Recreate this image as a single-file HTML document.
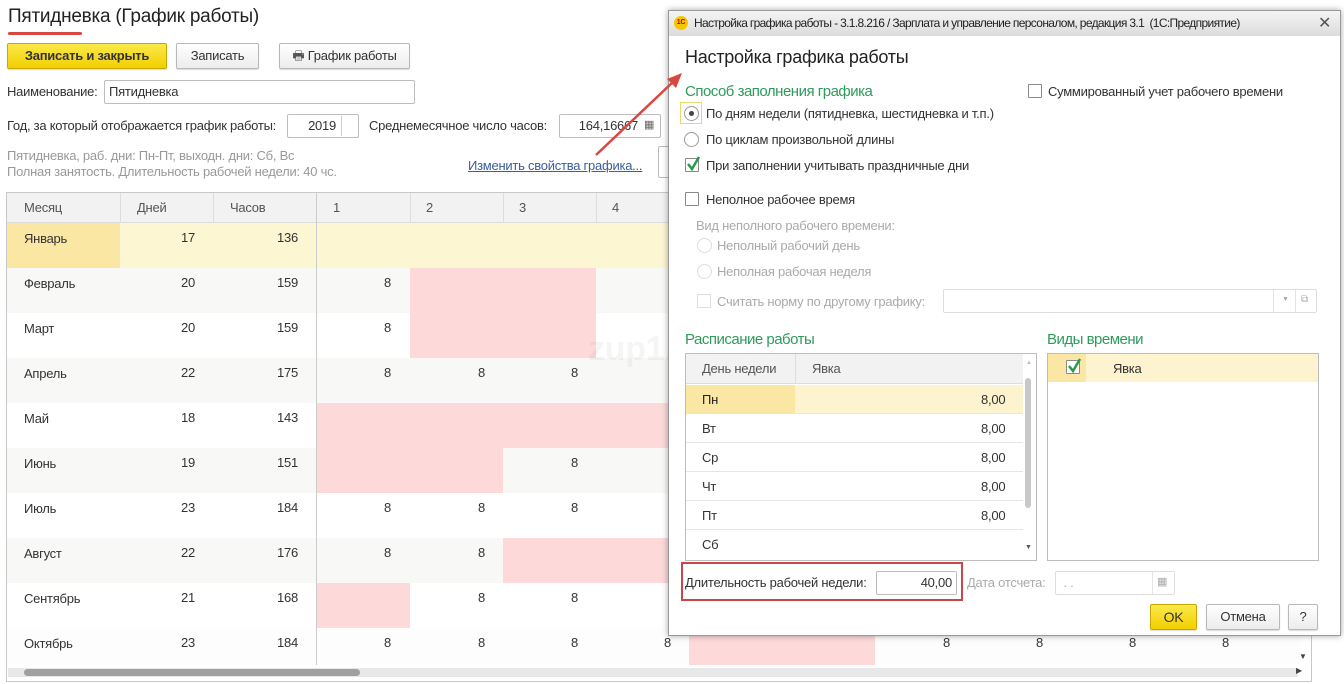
<!DOCTYPE html>
<html><head><meta charset="utf-8"><style>
*{margin:0;padding:0;box-sizing:border-box}
body{width:1344px;height:684px;overflow:hidden;background:#fff;font-family:"Liberation Sans",Arial,sans-serif;font-size:13px;color:#333;position:relative;letter-spacing:-0.25px}
.a{position:absolute;white-space:nowrap}
.btn{position:absolute;border:1px solid #b8b8b8;border-radius:2px;background:linear-gradient(#fff,#ececec);text-align:center;line-height:24px;font-size:13px;color:#333;box-shadow:0 1px 1px rgba(0,0,0,.15)}
.yb{background:linear-gradient(#fbe94a,#f2cf00);border-color:#c9a900;font-weight:bold}
.inp{position:absolute;border:1px solid #bdbdbd;background:#fff;border-radius:2px;height:24px;line-height:22px;padding:0 4px}
.pk{position:absolute;background:#fdd9da;height:45px}
.n{position:absolute;width:93px;text-align:right;padding-right:18px;line-height:30px}
.cb{position:absolute;width:14px;height:14px;border:1px solid #8a8a8a;background:#fff;border-radius:1px}
.rd{position:absolute;width:15px;height:15px;border:1px solid #999;border-radius:50%;background:#fff}
.dis{color:#aaa;border-color:#ddd}
.tick{position:absolute}
</style></head><body>
<div class="a" style="left:8px;top:6px;font-size:19px;color:#222">Пятидневка (График работы)</div>
<div class="a" style="left:8px;top:32px;width:74px;height:3px;background:#d9473f;border-radius:2px"></div>
<div class="btn yb" style="left:7px;top:43px;width:160px;height:26px">Записать и закрыть</div>
<div class="btn" style="left:176px;top:43px;width:83px;height:26px">Записать</div>
<div class="btn" style="left:279px;top:43px;width:131px;height:26px"><span style="color:#555">&#128438;</span> График работы</div>
<div class="a" style="left:7px;top:84px">Наименование:</div>
<div class="inp" style="left:104px;top:80px;width:311px">Пятидневка</div>
<div class="a" style="left:7px;top:118px">Год, за который отображается график работы:</div>
<div class="inp" style="left:287px;top:114px;width:72px;text-align:right;padding-right:22px">2019</div>
<div class="a" style="left:341px;top:116px;width:1px;height:20px;background:#ccc"></div>
<div class="a" style="left:369px;top:118px">Среднемесячное число часов:</div>
<div class="inp" style="left:559px;top:114px;width:102px;text-align:right;padding-right:22px">164,16667</div>
<div class="a" style="left:644px;top:118px;font-size:11px;color:#666">&#9638;</div>
<div class="a" style="left:7px;top:148px;color:#999">Пятидневка, раб. дни: Пн-Пт, выходн. дни: Сб, Вс</div>
<div class="a" style="left:7px;top:164px;color:#999">Полная занятость. Длительность рабочей недели: 40 чс.</div>
<div class="a" style="left:468px;top:158px;color:#3a5f9a;text-decoration:underline">Изменить свойства графика...</div>
<div class="a" style="left:658px;top:146px;width:14px;height:32px;border:1px solid #bbb;border-radius:2px"></div>

<!-- table -->
<div class="a" style="left:6px;top:192px;width:1306px;height:490px;border:1px solid #c8c8c8"></div>
<div class="a" style="left:7px;top:193px;width:1304px;height:30px;background:#f2f2f2;border-bottom:1px solid #ddd"></div>
<div class="a" style="left:24px;top:200px;color:#555">Месяц</div>
<div class="a" style="left:137px;top:200px;color:#555">Дней</div>
<div class="a" style="left:230px;top:200px;color:#555">Часов</div>
<div class="a" style="left:120px;top:193px;width:1px;height:30px;background:#ddd"></div>
<div class="a" style="left:213px;top:193px;width:1px;height:30px;background:#ddd"></div>
<div class="a" style="left:410px;top:193px;width:1px;height:30px;background:#ddd"></div>
<div class="a" style="left:503px;top:193px;width:1px;height:30px;background:#ddd"></div>
<div class="a" style="left:596px;top:193px;width:1px;height:30px;background:#ddd"></div>
<div class="a" style="left:333px;top:200px;color:#555">1</div>
<div class="a" style="left:426px;top:200px;color:#555">2</div>
<div class="a" style="left:519px;top:200px;color:#555">3</div>
<div class="a" style="left:612px;top:200px;color:#555">4</div>
<!-- row backgrounds -->
<div class="a" style="left:7px;top:223px;width:1293px;height:45px;background:#fdf6d3"></div>
<div class="a" style="left:7px;top:223px;width:113px;height:45px;background:#fbe7a4"></div>
<div class="a" style="left:7px;top:268px;width:1293px;height:45px;background:#f8f9f6"></div>
<div class="a" style="left:7px;top:358px;width:1293px;height:45px;background:#f8f9f6"></div>
<div class="a" style="left:7px;top:448px;width:1293px;height:45px;background:#f8f9f6"></div>
<div class="a" style="left:7px;top:538px;width:1293px;height:45px;background:#f8f9f6"></div>
<div class="a" style="left:7px;top:628px;width:1293px;height:37px;background:#fdfdfd"></div>
<!-- pink -->
<div class="pk" style="left:410px;top:268px;width:186px"></div>
<div class="pk" style="left:410px;top:313px;width:186px"></div>
<div class="pk" style="left:316px;top:403px;width:360px"></div>
<div class="pk" style="left:316px;top:448px;width:187px"></div>
<div class="pk" style="left:503px;top:538px;width:170px"></div>
<div class="pk" style="left:316px;top:583px;width:94px"></div>
<div class="pk" style="left:689px;top:628px;width:186px;height:37px"></div>
<div class="a" style="left:316px;top:193px;width:1px;height:472px;background:#ccc"></div>
<!-- rows -->
<div class="a" style="left:24px;top:231px">Январь</div><div class="n" style="left:120px;top:223px">17</div><div class="n" style="left:213px;top:223px;width:103px">136</div>
<div class="a" style="left:24px;top:276px">Февраль</div><div class="n" style="left:120px;top:268px">20</div><div class="n" style="left:213px;top:268px;width:103px">159</div><div class="n" style="left:316px;top:268px">8</div>
<div class="a" style="left:24px;top:321px">Март</div><div class="n" style="left:120px;top:313px">20</div><div class="n" style="left:213px;top:313px;width:103px">159</div><div class="n" style="left:316px;top:313px">8</div>
<div class="a" style="left:24px;top:366px">Апрель</div><div class="n" style="left:120px;top:358px">22</div><div class="n" style="left:213px;top:358px;width:103px">175</div><div class="n" style="left:316px;top:358px">8</div><div class="n" style="left:410px;top:358px">8</div><div class="n" style="left:503px;top:358px">8</div>
<div class="a" style="left:24px;top:411px">Май</div><div class="n" style="left:120px;top:403px">18</div><div class="n" style="left:213px;top:403px;width:103px">143</div>
<div class="a" style="left:24px;top:456px">Июнь</div><div class="n" style="left:120px;top:448px">19</div><div class="n" style="left:213px;top:448px;width:103px">151</div><div class="n" style="left:503px;top:448px">8</div>
<div class="a" style="left:24px;top:501px">Июль</div><div class="n" style="left:120px;top:493px">23</div><div class="n" style="left:213px;top:493px;width:103px">184</div><div class="n" style="left:316px;top:493px">8</div><div class="n" style="left:410px;top:493px">8</div><div class="n" style="left:503px;top:493px">8</div>
<div class="a" style="left:24px;top:546px">Август</div><div class="n" style="left:120px;top:538px">22</div><div class="n" style="left:213px;top:538px;width:103px">176</div><div class="n" style="left:316px;top:538px">8</div><div class="n" style="left:410px;top:538px">8</div>
<div class="a" style="left:24px;top:591px">Сентябрь</div><div class="n" style="left:120px;top:583px">21</div><div class="n" style="left:213px;top:583px;width:103px">168</div><div class="n" style="left:410px;top:583px">8</div><div class="n" style="left:503px;top:583px">8</div>
<div class="a" style="left:24px;top:636px">Октябрь</div><div class="n" style="left:120px;top:628px">23</div><div class="n" style="left:213px;top:628px;width:103px">184</div><div class="n" style="left:316px;top:628px">8</div><div class="n" style="left:410px;top:628px">8</div><div class="n" style="left:503px;top:628px">8</div><div class="n" style="left:596px;top:628px">8</div>
<div class="n" style="left:875px;top:628px">8</div><div class="n" style="left:968px;top:628px">8</div><div class="n" style="left:1061px;top:628px">8</div><div class="n" style="left:1154px;top:628px">8</div>
<!-- scrollbars -->
<div class="a" style="left:8px;top:668px;width:1290px;height:9px;background:#e8e8e8"></div>
<div class="a" style="left:24px;top:669px;width:336px;height:7px;background:#a0a0a0;border-radius:4px"></div>
<div class="a" style="left:1296px;top:666px;font-size:8px;color:#444">&#9654;</div>
<div class="a" style="left:1299px;top:652px;font-size:8px;color:#444">&#9660;</div>
<div class="a" style="left:588px;top:330px;font-size:34px;font-weight:bold;color:rgba(0,0,0,.04)">zup1.ru</div>

<!-- dialog -->
<div class="a" style="left:668px;top:10px;width:673px;height:626px;background:#fff;border:1px solid #9a9a9a;box-shadow:0 0 6px rgba(0,0,0,.35)"></div>
<div class="a" style="left:669px;top:11px;width:671px;height:25px;background:linear-gradient(#f4f4f4,#dcdcdc)"></div>
<div class="a" style="left:674px;top:16px;width:14px;height:14px;border-radius:50%;background:#f7c600;font-size:7px;color:#b00;font-weight:bold;text-align:center;line-height:14px">1С</div>
<div class="a" style="left:694px;top:16px;font-size:12px;color:#222;letter-spacing:-.65px">Настройка графика работы - 3.1.8.216 / Зарплата и управление персоналом, редакция 3.1&nbsp;&nbsp;(1С:Предприятие)</div>
<div class="a" style="left:1318px;top:13px;font-size:16px;color:#555">✕</div>
<div class="a" style="left:685px;top:47px;font-size:18px;color:#222">Настройка графика работы</div>
<div class="a" style="left:685px;top:83px;font-size:15px;color:#2e9a5c;letter-spacing:-.5px">Способ заполнения графика</div>
<div class="cb" style="left:1028px;top:84px"></div><div class="a" style="left:1048px;top:84px">Суммированный учет рабочего времени</div>
<div class="a" style="left:680px;top:102px;width:22px;height:22px;border:1px solid #e8d870"></div>
<div class="rd" style="left:684px;top:106px"></div><div class="a" style="left:689px;top:111px;width:5px;height:5px;border-radius:50%;background:#444"></div>
<div class="a" style="left:706px;top:106px">По дням недели (пятидневка, шестидневка и т.п.)</div>
<div class="rd" style="left:684px;top:132px"></div><div class="a" style="left:706px;top:132px">По циклам произвольной длины</div>
<div class="cb" style="left:685px;top:158px"></div>
<svg class="tick" style="left:685px;top:154px" width="18" height="20"><path d="M3 10 L7 15 L14 3" stroke="#2a9a4a" stroke-width="2.5" fill="none"/></svg>
<div class="a" style="left:706px;top:158px">При заполнении учитывать праздничные дни</div>
<div class="cb" style="left:685px;top:192px"></div><div class="a" style="left:706px;top:192px">Неполное рабочее время</div>
<div class="a" style="left:696px;top:218px;color:#aaa">Вид неполного рабочего времени:</div>
<div class="rd dis" style="left:697px;top:238px"></div><div class="a" style="left:717px;top:238px;color:#aaa">Неполный рабочий день</div>
<div class="rd dis" style="left:697px;top:264px"></div><div class="a" style="left:717px;top:264px;color:#aaa">Неполная рабочая неделя</div>
<div class="cb dis" style="left:697px;top:294px"></div><div class="a" style="left:717px;top:294px;color:#aaa">Считать норму по другому графику:</div>
<div class="inp" style="left:943px;top:289px;width:374px;border-color:#ddd"></div>
<div class="a" style="left:1273px;top:290px;width:1px;height:22px;background:#e4e4e4"></div>
<div class="a" style="left:1295px;top:290px;width:1px;height:22px;background:#e4e4e4"></div>
<div class="a" style="left:1282px;top:296px;font-size:7px;color:#aaa">▼</div>
<div class="a" style="left:1301px;top:294px;font-size:10px;color:#aaa">⧉</div>
<div class="a" style="left:685px;top:331px;font-size:15px;color:#2e9a5c;letter-spacing:-.5px">Расписание работы</div>
<div class="a" style="left:1047px;top:331px;font-size:15px;color:#2e9a5c;letter-spacing:-.5px">Виды времени</div>
<div class="a" style="left:685px;top:353px;width:352px;height:208px;border:1px solid #bdbdbd"></div>
<div class="a" style="left:686px;top:354px;width:337px;height:30px;background:#f2f2f2;border-bottom:1px solid #ddd"></div>
<div class="a" style="left:795px;top:354px;width:1px;height:30px;background:#ddd"></div>
<div class="a" style="left:702px;top:361px;color:#555">День недели</div><div class="a" style="left:812px;top:361px;color:#555">Явка</div>
<div class="a" style="left:686px;top:385px;width:337px;height:28px;background:#fdf4cf"></div>
<div class="a" style="left:686px;top:385px;width:109px;height:28px;background:#fbe7a4"></div>
<div class="a" style="left:702px;top:392px;color:#222">Пн</div><div class="a" style="left:981px;top:392px">8,00</div>
<div class="a" style="left:686px;top:413px;width:337px;height:1px;background:#e6e6e6"></div>
<div class="a" style="left:702px;top:421px">Вт</div><div class="a" style="left:981px;top:421px">8,00</div>
<div class="a" style="left:686px;top:442px;width:337px;height:1px;background:#e6e6e6"></div>
<div class="a" style="left:702px;top:450px">Ср</div><div class="a" style="left:981px;top:450px">8,00</div>
<div class="a" style="left:686px;top:471px;width:337px;height:1px;background:#e6e6e6"></div>
<div class="a" style="left:702px;top:479px">Чт</div><div class="a" style="left:981px;top:479px">8,00</div>
<div class="a" style="left:686px;top:500px;width:337px;height:1px;background:#e6e6e6"></div>
<div class="a" style="left:702px;top:508px">Пт</div><div class="a" style="left:981px;top:508px">8,00</div>
<div class="a" style="left:686px;top:529px;width:337px;height:1px;background:#e6e6e6"></div>
<div class="a" style="left:702px;top:537px">Сб</div>
<div class="a" style="left:1025px;top:378px;width:6px;height:130px;background:#c8c8c8;border-radius:3px"></div>
<div class="a" style="left:1025px;top:544px;font-size:7px;color:#555">▼</div>
<div class="a" style="left:1026px;top:360px;font-size:6px;color:#bbb">▲</div>
<div class="a" style="left:1047px;top:353px;width:272px;height:208px;border:1px solid #bdbdbd"></div>
<div class="a" style="left:1048px;top:354px;width:270px;height:28px;background:#fdf4cf"></div>
<div class="a" style="left:1048px;top:354px;width:38px;height:28px;background:#fbe7a4"></div>
<div class="cb" style="left:1066px;top:360px"></div>
<svg class="tick" style="left:1066px;top:356px" width="18" height="20"><path d="M3 10 L7 15 L14 3" stroke="#2a9a4a" stroke-width="2.5" fill="none"/></svg>
<div class="a" style="left:1113px;top:361px">Явка</div>
<div class="a" style="left:681px;top:562px;width:282px;height:39px;border:2px solid #c9474a"></div>
<div class="a" style="left:685px;top:575px">Длительность рабочей недели:</div>
<div class="inp" style="left:876px;top:571px;width:81px;text-align:right">40,00</div>
<div class="a" style="left:967px;top:575px;color:#aaa">Дата отсчета:</div>
<div class="inp" style="left:1055px;top:571px;width:120px;border-color:#ddd;color:#aaa">&nbsp;. .</div>
<div class="a" style="left:1152px;top:572px;width:1px;height:22px;background:#e4e4e4"></div>
<div class="a" style="left:1157px;top:575px;font-size:11px;color:#aaa">▦</div>
<div class="btn yb" style="left:1150px;top:604px;width:47px;height:26px;font-weight:normal;font-size:14px">OK</div>
<div class="btn" style="left:1206px;top:604px;width:74px;height:26px">Отмена</div>
<div class="btn" style="left:1288px;top:604px;width:30px;height:26px">?</div>
<!-- arrow on top -->
<svg class="a" style="left:590px;top:68px" width="100" height="95"><line x1="6" y1="87" x2="84" y2="13" stroke="#d9473f" stroke-width="2.5"/><polygon points="92,5 77,11 86,20" fill="#d9473f"/></svg>
</body></html>
